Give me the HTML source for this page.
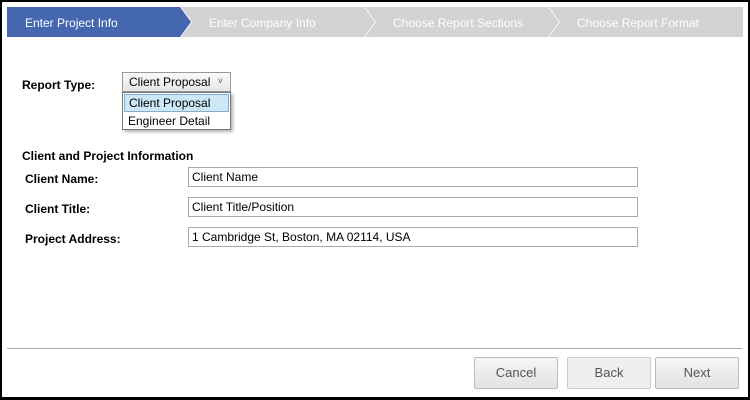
<html><head><style>
body{margin:0;width:750px;height:400px;background:#000;font-family:"Liberation Sans",sans-serif;overflow:hidden}
.f{position:absolute;left:2px;top:2px;width:746px;height:395px;background:#fff}
.t{position:absolute;font-size:12px;color:#000}
.b{font-weight:bold}
.in{position:absolute;left:188px;width:445px;height:18px;border:1px solid #aaa;font-size:12px;line-height:18px;padding-left:3px;box-sizing:content-box}
.btn{position:absolute;top:357px;width:82px;height:30px;border:1px solid #bbb;border-radius:2px;background:linear-gradient(#f6f6f6,#e2e2e2);font-size:13px;color:#555;text-align:center;line-height:30px}
</style></head><body>
<div class="f"></div>
<svg style="position:absolute;left:0;top:0" width="750" height="40" font-family="Liberation Sans" font-size="12">
<polygon points="549,7 743,7 743,37 549,37 560,22" fill="#d3d3d3"/>
<polygon points="365,7 548,7 559,22 548,37 365,37 376,22" fill="#d3d3d3"/>
<polygon points="181,7 364,7 375,22 364,37 181,37 192,22" fill="#d3d3d3"/>
<polygon points="7,7 180,7 191,22 180,37 7,37" fill="#4467b0"/>
<text x="25" y="27" fill="#fff">Enter Project Info</text>
<text x="209" y="27" fill="#fff">Enter Company Info</text>
<text x="393" y="27" fill="#fff">Choose Report Sections</text>
<text x="577" y="27" fill="#fff">Choose Report Format</text>
</svg>
<div class="t b" style="left:22px;top:78px">Report Type:</div>
<div style="position:absolute;left:122px;top:72px;height:20px;border:1px solid #999;background:linear-gradient(#fafafa,#e6e6e6);font-size:12px;line-height:19px;padding-left:6px;box-sizing:border-box;width:109px">Client Proposal<span style="position:absolute;right:7px;top:-1px;font-size:9px;color:#555">&#709;</span></div>
<div style="position:absolute;left:122px;top:92px;width:109px;height:38px;border:1px solid #777;background:#fff;box-sizing:border-box;box-shadow:2px 2px 3px rgba(0,0,0,.3);font-size:12px">
<div style="margin:1px;height:16px;background:#cce8f6;border:1px solid #8ac;line-height:16px;padding-left:4px">Client Proposal</div>
<div style="line-height:17px;padding-left:5px">Engineer Detail</div></div>
<div class="t b" style="left:22px;top:149px">Client and Project Information</div>
<div class="t b" style="left:25px;top:172px">Client Name:</div>
<div class="t b" style="left:25px;top:202px">Client Title:</div>
<div class="t b" style="left:25px;top:232px">Project Address:</div>
<div class="in" style="top:167px">Client Name</div>
<div class="in" style="top:197px">Client Title/Position</div>
<div class="in" style="top:227px">1 Cambridge St, Boston, MA 02114, USA</div>
<div style="position:absolute;left:7px;top:348px;width:735px;height:1px;background:#aaa"></div>
<div class="btn" style="left:474px">Cancel</div>
<div class="btn" style="left:567px;background:#efefef;border-color:#ccc">Back</div>
<div class="btn" style="left:655px">Next</div>
</body></html>
